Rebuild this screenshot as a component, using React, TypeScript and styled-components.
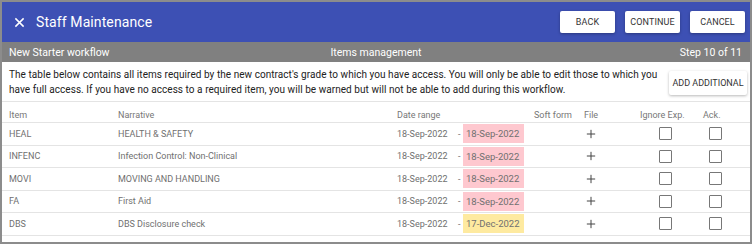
import React from 'react'
import styled, { createGlobalStyle } from 'styled-components'

type IItem = {
  code: string
  narrative: string
  from: string
  to: string
  tone: 'expired' | 'warning'
}

const ITEMS: IItem[] = [
  { code: 'HEAL', narrative: 'HEALTH & SAFETY', from: '18-Sep-2022', to: '18-Sep-2022', tone: 'expired' },
  { code: 'INFENC', narrative: 'Infection Control: Non-Clinical', from: '18-Sep-2022', to: '18-Sep-2022', tone: 'expired' },
  { code: 'MOVI', narrative: 'MOVING AND HANDLING', from: '18-Sep-2022', to: '18-Sep-2022', tone: 'expired' },
  { code: 'FA', narrative: 'First Aid', from: '18-Sep-2022', to: '18-Sep-2022', tone: 'expired' },
  { code: 'DBS', narrative: 'DBS Disclosure check', from: '18-Sep-2022', to: '17-Dec-2022', tone: 'warning' },
]

const COLUMNS = '109px 279px 62px 75px 50px 56px 63px 1fr'

const GlobalStyle = createGlobalStyle`
  body {
    margin: 0;
    font-family: Roboto, 'Liberation Sans', sans-serif;
    background: #fff;
  }
`

const App = () => {
  return (
    <>
      <GlobalStyle />
      <FrameStyle>
        <HeaderStyle>
          <TitleStyle>
            <CloseIcon viewBox="0 0 12 12">
              <path d="M1.5 1.5 L10.5 10.5 M10.5 1.5 L1.5 10.5" />
            </CloseIcon>
            Staff Maintenance
          </TitleStyle>
          <ButtonGroupStyle>
            <ButtonStyle>Back</ButtonStyle>
            <ButtonStyle>Continue</ButtonStyle>
            <ButtonStyle>Cancel</ButtonStyle>
          </ButtonGroupStyle>
        </HeaderStyle>
        <SubBarStyle>
          <span>New Starter workflow</span>
          <SubCenterStyle>Items management</SubCenterStyle>
          <span>Step 10 of 11</span>
        </SubBarStyle>
        <IntroStyle>
          <p>
            The table below contains all items required by the new contract's grade to which you have
            access. You will only be able to edit those to which you have full access. If you have no
            access to a required item, you will be warned but will not be able to add during this
            workflow.
          </p>
          <AddButtonStyle>Add Additional</AddButtonStyle>
        </IntroStyle>
        <TableStyle>
          <HeadRowStyle>
            <span>Item</span>
            <span>Narrative</span>
            <span>Date range</span>
            <span />
            <span>Soft form</span>
            <span>File</span>
            <span>Ignore Exp.</span>
            <span>Ack.</span>
          </HeadRowStyle>
          {ITEMS.map((item) => (
            <RowStyle key={item.code}>
              <span>{item.code}</span>
              <span>{item.narrative}</span>
              <span>{item.from}</span>
              <ToCellStyle>
                <DashStyle>-</DashStyle>
                <DateBadgeStyle tone={item.tone}>{item.to}</DateBadgeStyle>
              </ToCellStyle>
              <span />
              <PlusStyle viewBox="0 0 12 12">
                <path d="M6 1 V11 M1 6 H11" />
              </PlusStyle>
              <span>
                <CheckboxStyle offset={19} />
              </span>
              <span>
                <CheckboxStyle offset={6} />
              </span>
            </RowStyle>
          ))}
        </TableStyle>
      </FrameStyle>
    </>
  )
}

export default App

const FrameStyle = styled.div`
  width: 752px;
  height: 244px;
  box-sizing: border-box;
  border: 2px solid #8c8c8c;
  overflow: hidden;
`

const HeaderStyle = styled.header`
  height: 40px;
  background-color: #3d50b4;
  display: flex;
  align-items: center;
  justify-content: space-between;
  padding: 0 5px 0 12px;
`

const TitleStyle = styled.h1`
  margin: 0;
  display: flex;
  align-items: center;
  gap: 11px;
  color: #fff;
  font-size: 14px;
  font-weight: 400;
  letter-spacing: 0.1px;
`

const CloseIcon = styled.svg`
  width: 11px;
  height: 11px;
  stroke: #fff;
  stroke-width: 1.6;
  fill: none;
`

const ButtonGroupStyle = styled.div`
  display: flex;
  gap: 10px;
`

const ButtonStyle = styled.button`
  width: 55px;
  height: 22px;
  padding: 0;
  border: none;
  border-radius: 2px;
  background: #fff;
  box-shadow: 0 1px 3px rgba(0, 0, 0, 0.3);
  color: #333;
  font-family: Roboto, 'Liberation Sans', sans-serif;
  font-size: 9px;
  text-transform: uppercase;
  letter-spacing: 0.1px;
`

const SubBarStyle = styled.div`
  height: 20px;
  background-color: #808080;
  color: #fff;
  font-size: 10.5px;
  display: flex;
  align-items: center;
  justify-content: space-between;
  padding: 0 8px 0 7px;
  position: relative;
`

const SubCenterStyle = styled.span`
  position: absolute;
  left: 50%;
  transform: translateX(-50%);
`

const IntroStyle = styled.div`
  height: 40px;
  box-sizing: border-box;
  border-bottom: 1px solid #e4e4e4;
  display: flex;
  align-items: center;
  justify-content: space-between;
  padding: 0 3px 0 7px;

  p {
    margin: 0;
    width: 652px;
    color: #222;
    font-size: 10px;
    line-height: 15px;
    letter-spacing: 0.05px;
  }
`

const AddButtonStyle = styled.button`
  width: 78px;
  height: 24px;
  padding: 0;
  border: none;
  border-radius: 2px;
  background: #fff;
  box-shadow: 0 1px 3px rgba(0, 0, 0, 0.28);
  color: #333;
  font-family: Roboto, 'Liberation Sans', sans-serif;
  font-size: 9px;
  text-transform: uppercase;
  margin-top: 2px;
`

const TableStyle = styled.div`
  display: flex;
  flex-direction: column;
`

const HeadRowStyle = styled.div`
  display: grid;
  grid-template-columns: ${COLUMNS};
  align-items: center;
  height: 21px;
  box-sizing: border-box;
  padding: 5px 0 0 7px;
  border-bottom: 1px solid #e4e4e4;
  color: #777;
  font-size: 9px;
`

const RowStyle = styled.div`
  display: grid;
  grid-template-columns: ${COLUMNS};
  align-items: center;
  height: 22.5px;
  box-sizing: border-box;
  padding-left: 7px;
  border-bottom: 1px solid #e4e4e4;
  color: #707070;
  font-size: 9px;
`

const ToCellStyle = styled.span`
  display: flex;
  align-items: center;
`

const DashStyle = styled.span`
  width: 5px;
  margin-left: -1px;
`

const DateBadgeStyle = styled.span<{ tone: 'expired' | 'warning' }>`
  display: flex;
  align-items: center;
  height: 19px;
  width: 61px;
  padding-left: 3px;
  box-sizing: border-box;
  font-size: 9.5px;
  background-color: ${({ tone }) => (tone === 'expired' ? '#fec8cf' : '#feeaa0')};
`

const PlusStyle = styled.svg`
  width: 10px;
  height: 10px;
  margin-left: 2px;
  stroke: #444;
  stroke-width: 1.2;
  fill: none;
`

const CheckboxStyle = styled.span<{ offset: number }>`
  display: block;
  width: 11px;
  height: 11px;
  margin-left: ${({ offset }) => offset}px;
  border: 1px solid #777;
  border-radius: 1px;
  box-sizing: content-box;
`
